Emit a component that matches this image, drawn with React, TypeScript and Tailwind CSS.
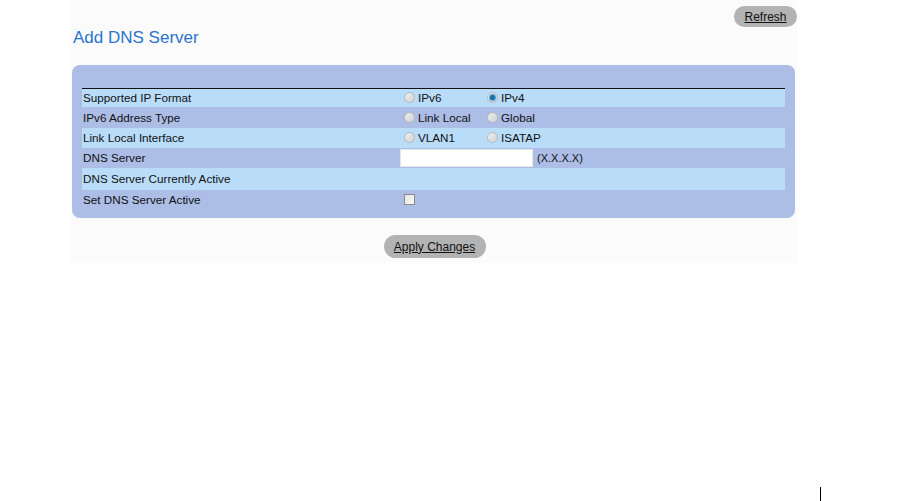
import React from 'react';

function Radio({ checked = false }: { checked?: boolean }) {
  return (
    <span className="inline-flex items-center justify-center w-[11px] h-[11px] rounded-full border border-[#b4b8bd] bg-gradient-to-br from-[#eeeeee] to-[#cfd3d7] mr-[3px]">
      {checked && <span className="w-[5px] h-[5px] rounded-full bg-[#1f6fa8] ring-1 ring-[#5ba3d6]" />}
    </span>
  );
}

function Row({ label, light, h, children }: { label: string; light?: boolean; h: string; children?: React.ReactNode }) {
  return (
    <div className={`flex items-center ${h} ${light ? 'bg-[#b9dcf9]' : ''}`}>
      <div className="w-[322px] pl-[1px]">{label}</div>
      <div className="flex items-center">{children}</div>
    </div>
  );
}

export default function App() {
  return (
    <div className="relative w-[900px] h-[501px] bg-white text-[11.7px] text-[#111]" style={{ fontFamily: '"Liberation Sans", Arial, sans-serif' }}>
      <div className="ml-[70px] w-[727px] h-[262px] bg-[#fbfbfb] flex flex-col">
        <div className="flex justify-end pt-[6px]">
          <button className="w-[63px] h-[21px] rounded-full bg-[#b3b3b3] underline text-[12px] text-[#111]">Refresh</button>
        </div>
        <h1 className="ml-[3px] mt-[1px] text-[17px] leading-[20px] text-[#2a73cf]">Add DNS Server</h1>
        <div className="mt-[17px] ml-[2px] w-[723px] rounded-[8px] bg-[#acbde6] px-[10px] pt-[23px] pb-[8px]">
          <div className="border-t border-[#111]">
            <Row label="Supported IP Format" light h="h-[18px]">
              <span className="flex items-center w-[83px]"><Radio />IPv6</span>
              <span className="flex items-center"><Radio checked />IPv4</span>
            </Row>
            <Row label="IPv6 Address Type" h="h-[21px]">
              <span className="flex items-center w-[83px]"><Radio />Link Local</span>
              <span className="flex items-center"><Radio />Global</span>
            </Row>
            <Row label="Link Local Interface" light h="h-[20px]">
              <span className="flex items-center w-[83px]"><Radio />VLAN1</span>
              <span className="flex items-center"><Radio />ISATAP</span>
            </Row>
            <Row label="DNS Server" h="h-[20px]">
              <span className="-ml-[4px] w-[133px] h-[18px] bg-white border border-[#e6e6e6]" />
              <span className="ml-[4px] text-[11px]">(X.X.X.X)</span>
            </Row>
            <Row label="DNS Server Currently Active" light h="h-[22px]" />
            <Row label="Set DNS Server Active" h="h-[20px]">
              <span className="-mt-[2px] w-[11px] h-[11px] border border-[#8a8a8a] bg-gradient-to-br from-[#e4e4e4] to-[#f8f8f8]" />
            </Row>
          </div>
        </div>
        <div className="flex justify-center mt-[17px]">
          <button className="w-[102px] h-[23px] rounded-full bg-[#b3b3b3] underline text-[12px] text-[#111] ml-[2px]">Apply Changes</button>
        </div>
      </div>
      <div className="absolute left-[820px] top-[487px] w-px h-[14px] bg-black" />
    </div>
  );
}
